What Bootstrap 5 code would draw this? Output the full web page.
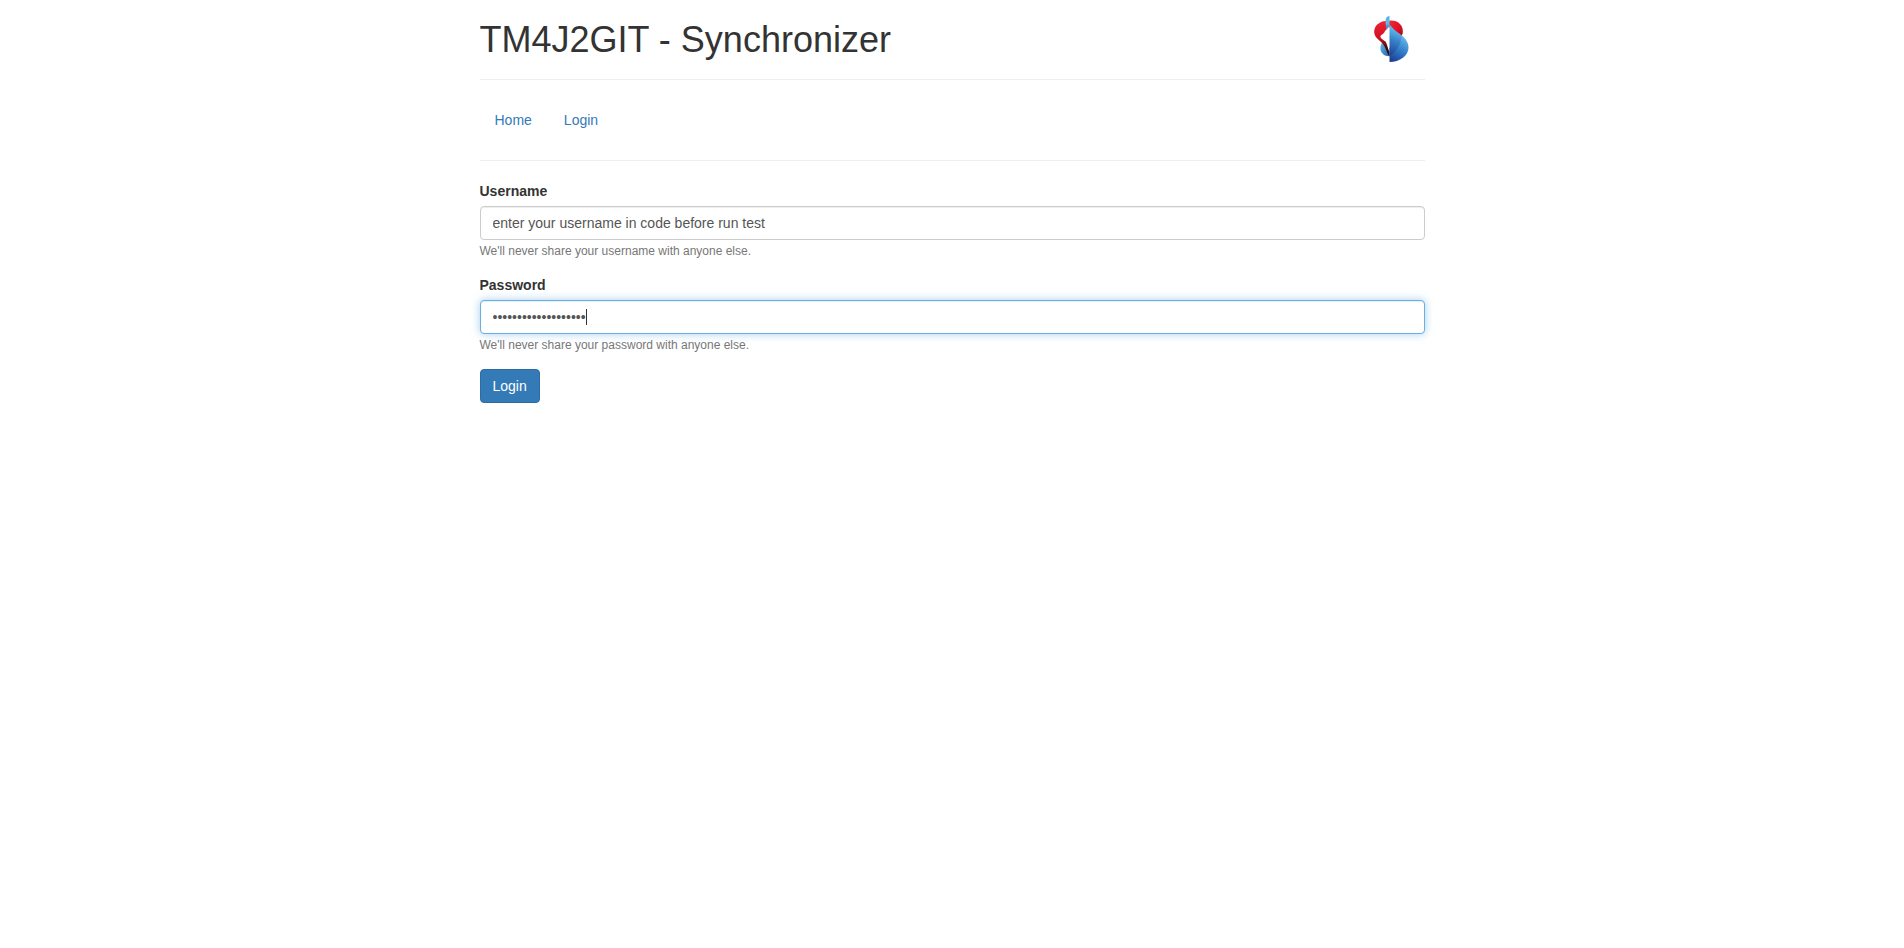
<!DOCTYPE html>
<html lang="en">
<head>
<meta charset="utf-8">
<meta name="viewport" content="width=device-width, initial-scale=1">
<title>TM4J2GIT - Synchronizer</title>
<link href="https://cdn.jsdelivr.net/npm/bootstrap@5.3.0/dist/css/bootstrap.min.css" rel="stylesheet">
<style>
  body { font-family: "Liberation Sans", Arial, sans-serif; font-size: 14px; line-height: 20px; color: #333; }
  .page { max-width: 975px; padding: 0 15px; }
  .page-top { padding: 20px 0 19px; border-bottom: 1px solid #eee; }
  .page-top h1 { font-size: 36px; line-height: 40px; font-weight: 400; }
  .brand-logo { width: 35px; height: 46px; margin: -4px 16px -2px 0; }
  .page-nav { padding: 20px 0; border-bottom: 1px solid #eee; }
  .page-nav .nav { gap: 2px; }
  .page-nav .nav-link { padding: 10px 15px; color: #337ab7; }
  .field { margin-bottom: 13px; }
  .field label { font-weight: 700; margin-bottom: 5px; }
  .field .form-control { height: 34px; padding: 6px 12px; font-size: 14px; line-height: 20px; color: #555; border: 1px solid #ccc; border-radius: 4px; box-shadow: inset 0 1px 1px rgba(0,0,0,.075); }
  .field .form-control:focus { border-color: #66afe9; box-shadow: inset 0 1px 1px rgba(0,0,0,.075), 0 0 8px rgba(102,175,233,.6); }
  .hint { font-size: 12px; line-height: 22px; color: #777; }
  .caret-mark { position: absolute; left: 106px; top: 9px; width: 1px; height: 16px; background: #333; pointer-events: none; }
  #password { caret-color: transparent; }
  #password.edited { caret-color: auto; }
  #password.edited + .caret-mark, #password:not(:focus) + .caret-mark { display: none; }
  .btn-login { --bs-btn-color: #fff; --bs-btn-bg: #337ab7; --bs-btn-border-color: #2e6da4; --bs-btn-hover-color: #fff; --bs-btn-hover-bg: #286090; --bs-btn-padding-x: 12px; --bs-btn-padding-y: 6px; --bs-btn-font-size: 14px; --bs-btn-line-height: 20px; --bs-btn-border-radius: 4px; }
</style>
</head>
<body>
<div class="container-fluid page">
  <header class="page-top d-flex justify-content-between align-items-center">
    <h1 class="m-0">TM4J2GIT - Synchronizer</h1>
    <svg class="brand-logo flex-shrink-0" viewBox="44 33 104 138" role="img" aria-label="Logo">
      <defs>
        <linearGradient id="red" x1="0" y1="0" x2="1" y2="1"><stop offset="0" stop-color="#f3283a"/><stop offset=".6" stop-color="#dd1024"/><stop offset="1" stop-color="#a00816"/></linearGradient>
        <linearGradient id="ribbon" x1="0" y1="0" x2="0" y2="1"><stop offset="0" stop-color="#ee2435"/><stop offset=".5" stop-color="#d00f20"/><stop offset=".75" stop-color="#4a070b"/><stop offset="1" stop-color="#250508"/></linearGradient>
        <linearGradient id="sail" gradientUnits="userSpaceOnUse" x1="122" y1="80" x2="92" y2="155"><stop offset="0" stop-color="#5fb6e6"/><stop offset=".4" stop-color="#3480c8"/><stop offset="1" stop-color="#1f3b90"/></linearGradient>
        <linearGradient id="bowl" gradientUnits="userSpaceOnUse" x1="138" y1="102" x2="98" y2="168"><stop offset="0" stop-color="#62b6e6"/><stop offset=".45" stop-color="#3480ca"/><stop offset="1" stop-color="#1c3f94"/></linearGradient>
        <linearGradient id="lobe" x1="0" y1="0" x2="1" y2="1"><stop offset="0" stop-color="#62bce9"/><stop offset="1" stop-color="#2164ad"/></linearGradient>
        <linearGradient id="tip" x1="0" y1="0" x2="0" y2="1"><stop offset="0" stop-color="#49b3e4"/><stop offset=".5" stop-color="#64bde8"/><stop offset="1" stop-color="#2b80c2"/></linearGradient>
      </defs>
      <path fill="url(#lobe)" d="M72 108C62 118 60 132 66 142C72 151 80 154 90 154V139Z"/>
      <path fill="url(#red)" d="M89 47C113 44 131 59 130 80C130 87 128 91 124 94L89 66Z"/>
      <path fill="url(#ribbon)" d="M80 48C57 49 44 64 44 81C45 98 59 105 70 116C79 127 80 141 90 154V145C85 132 84 117 77 109C70 104 62 100 63 94C65 88 74 88 76 79L91 62V48Z"/>
      <path fill="url(#tip)" d="M78 48C78 39 82 34 90 33V62L79 75C82 64 77 57 78 48Z"/>
      <path fill="url(#bowl)" d="M117 84C136 97 147 111 147 128C147 151 121 171 90 171V130Z"/>
      <path fill="url(#sail)" d="M90 58C99 71 113 82 125 91C127 116 112 139 90 154Z"/>
    </svg>
  </header>
  <nav class="page-nav" aria-label="Main">
    <ul class="nav">
      <li class="nav-item"><a class="nav-link" href="#home">Home</a></li>
      <li class="nav-item"><a class="nav-link" href="#login">Login</a></li>
    </ul>
  </nav>
  <main class="pt-3 mt-1">
    <form id="login">
      <div class="field">
        <label class="d-block" for="username">Username</label>
        <input class="form-control" type="text" id="username" value="enter your username in code before run test" aria-describedby="username-hint">
        <small class="hint d-block" id="username-hint">We'll never share your username with anyone else.</small>
      </div>
      <div class="field">
        <label class="d-block" for="password">Password</label>
        <div class="position-relative">
          <input class="form-control" type="password" id="password" value="enter-your-password" aria-describedby="password-hint" autofocus>
          <span class="caret-mark" aria-hidden="true"></span>
        </div>
        <small class="hint d-block" id="password-hint">We'll never share your password with anyone else.</small>
      </div>
      <button class="btn btn-login" type="submit">Login</button>
    </form>
  </main>
</div>
<script src="https://cdn.jsdelivr.net/npm/bootstrap@5.3.0/dist/js/bootstrap.bundle.min.js"></script>
<script>
  const password = document.getElementById('password');
  password.focus();
  password.setSelectionRange(password.value.length, password.value.length);
  // The drawn caret gives way to the native one as soon as the field is used.
  for (const type of ['keydown', 'pointerdown']) {
    password.addEventListener(type, () => password.classList.add('edited'));
  }
</script>
</body>
</html>
